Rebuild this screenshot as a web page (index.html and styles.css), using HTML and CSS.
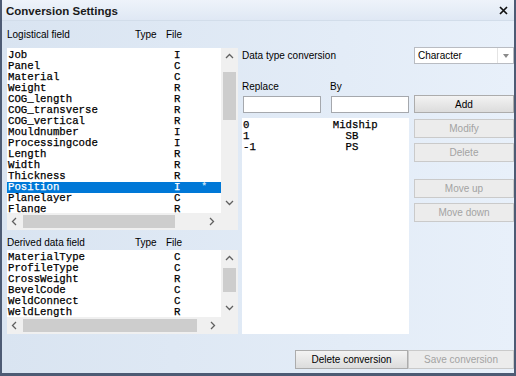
FILE: index.html
```html
<!DOCTYPE html>
<html>
	<head>
		<meta charset="UTF-8">
		<title>Conversion Settings</title>
		<link rel="stylesheet" href="styles.css">
	</head>
	<body>
		<div id="dlg">
			<div class="title">
				<strong>Conversion Settings</strong>
				<svg class="close" width="9" height="9" viewBox="0 0 9 9"><path d="M1 1L8 8M8 1L1 8" stroke="#111" stroke-width="1.7"/></svg>
			</div>
			<div class="main">
				<div class="left">
					<div class="hdr"><span>Logistical field</span><span>Type</span><span>File</span></div>
					<div class="list list1">
						<div class="rows">
							<div class="row"><span class="name">Job</span><span>I</span></div>
							<div class="row"><span class="name">Panel</span><span>C</span></div>
							<div class="row"><span class="name">Material</span><span>C</span></div>
							<div class="row"><span class="name">Weight</span><span>R</span></div>
							<div class="row"><span class="name">COG_length</span><span>R</span></div>
							<div class="row"><span class="name">COG_transverse</span><span>R</span></div>
							<div class="row"><span class="name">COG_vertical</span><span>R</span></div>
							<div class="row"><span class="name">Mouldnumber</span><span>I</span></div>
							<div class="row"><span class="name">Processingcode</span><span>I</span></div>
							<div class="row"><span class="name">Length</span><span>R</span></div>
							<div class="row"><span class="name">Width</span><span>R</span></div>
							<div class="row"><span class="name">Thickness</span><span>R</span></div>
							<div class="row sel"><span class="name">Position</span><span>I</span><span class="star">*</span></div>
							<div class="row"><span class="name">Planelayer</span><span>C</span></div>
							<div class="row"><span class="name">Flange</span><span>R</span></div>
						</div>
						<div class="vbar">
							<div class="arr up"><svg width="9" height="6"><polyline points="1,5 4.5,1.5 8,5" fill="none" stroke="#606060" stroke-width="1.3"/></svg></div>
							<div class="thumb"></div>
							<div class="fill"></div>
							<div class="arr dn"><svg width="9" height="6"><polyline points="1,1 4.5,4.5 8,1" fill="none" stroke="#606060" stroke-width="1.3"/></svg></div>
						</div>
						<div class="hbar">
							<div class="arr lt"><svg width="6" height="9"><polyline points="5,1 1.5,4.5 5,8" fill="none" stroke="#606060" stroke-width="1.3"/></svg></div>
							<div class="thumb"></div>
							<div class="fill"></div>
							<div class="arr rt"><svg width="6" height="9"><polyline points="1,1 4.5,4.5 1,8" fill="none" stroke="#606060" stroke-width="1.3"/></svg></div>
						</div>
						<div class="corner"></div>
					</div>
					<div class="hdr hdr2"><span>Derived data field</span><span>Type</span><span>File</span></div>
					<div class="list list2">
						<div class="rows">
							<div class="row"><span class="name">MaterialType</span><span>C</span></div>
							<div class="row"><span class="name">ProfileType</span><span>C</span></div>
							<div class="row"><span class="name">CrossWeight</span><span>R</span></div>
							<div class="row"><span class="name">BevelCode</span><span>C</span></div>
							<div class="row"><span class="name">WeldConnect</span><span>C</span></div>
							<div class="row"><span class="name">WeldLength</span><span>R</span></div>
						</div>
						<div class="vbar">
							<div class="arr up"><svg width="9" height="6"><polyline points="1,5 4.5,1.5 8,5" fill="none" stroke="#606060" stroke-width="1.3"/></svg></div>
							<div class="thumb"></div>
							<div class="fill"></div>
							<div class="arr dn"><svg width="9" height="6"><polyline points="1,1 4.5,4.5 8,1" fill="none" stroke="#606060" stroke-width="1.3"/></svg></div>
						</div>
						<div class="hbar">
							<div class="arr lt"><svg width="6" height="9"><polyline points="5,1 1.5,4.5 5,8" fill="none" stroke="#606060" stroke-width="1.3"/></svg></div>
							<div class="thumb"></div>
							<div class="fill"></div>
							<div class="arr rt"><svg width="6" height="9"><polyline points="1,1 4.5,4.5 1,8" fill="none" stroke="#606060" stroke-width="1.3"/></svg></div>
						</div>
						<div class="corner"></div>
					</div>
				</div>
				<div class="right">
					<div class="dtrow">
						<span>Data type conversion</span>
						<div class="combo"><span>Character</span><div class="drop"><i></i></div></div>
					</div>
					<div class="labels"><span>Replace</span><span>By</span></div>
					<div class="inputs">
						<input type="text" class="in1">
						<input type="text" class="in2">
						<button class="btn">Add</button>
					</div>
					<div class="lower">
						<div class="conv">0             Midship
1               SB
-1              PS</div>
						<div class="btns">
							<button class="btn off">Modify</button>
							<button class="btn off">Delete</button>
							<button class="btn off mv">Move up</button>
							<button class="btn off">Move down</button>
						</div>
					</div>
				</div>
			</div>
			<div class="foot">
				<button class="btn wide">Delete conversion</button>
				<button class="btn off save">Save conversion</button>
			</div>
		</div>
	</body>
</html>
```
FILE: styles.css
```css
* {margin: 0;padding: 0;box-sizing: border-box;}
body {width: 516px;height: 376px;overflow: hidden;font: 10px "Liberation Sans", Arial, sans-serif;color: #000;}
#dlg {width: 516px;height: 376px;display: flex;flex-direction: column;border: solid #4d5b74;border-width: 0 2px 3px 2px;background: linear-gradient(to right, #d9e4f1, #e8f0fa);}
.title {height: 21px;flex: none;display: flex;align-items: center;justify-content: space-between;padding: 1px 6px 0 4px;background: linear-gradient(#eef3fa, #dfe8f4);border-bottom: 1px solid #d2ddea;}
.title strong {font-size: 11.5px;color: #1a1a1a;}
.main {display: flex;gap: 4px;padding-left: 5px;height: 313px;flex: none;}

.left {width: 231px;display: flex;flex-direction: column;}
.hdr {display: grid;grid-template-columns: 128px 31px auto;height: 13px;line-height: 13px;margin: 7px 0 7px;}
.hdr2 {margin: 6px 0 1px;}
.list {display: grid;grid-template-columns: 214px 17px;background: #fff;}
.list1 {height: 182px;grid-template-rows: 165px 17px;}
.list2 {height: 84px;grid-template-rows: 67px 17px;}
.rows {overflow: hidden;padding-top: 2px;font: 10.7px/11px "Liberation Mono", "Courier New", monospace;-webkit-text-stroke: 0.25px;}
.row {display: flex;height: 11px;padding-left: 1px;white-space: pre;}
.row .name {width: 166px;}
.row.sel {background: #0078d7;color: #fff;}
.row .star {margin-left: 21px;font-size: 9px;color: #cfe3f7;}

.vbar, .hbar, .corner {background: #f0f0f0;}
.vbar {display: flex;flex-direction: column;}
.hbar {display: flex;}
.arr {display: flex;align-items: center;justify-content: center;flex: none;}
.vbar .up {height: 16px;}
.vbar .dn {height: 20px;}
.vbar .thumb {margin: 8px 2px 0;height: 48px;background: #cdcdcd;}
.list2 .vbar .up {height: 16px;}
.list2 .vbar .thumb {margin-top: 2px;height: 24px;}
.list2 .vbar .dn {height: 18px;}
.fill {flex: 1;}
.hbar .lt {width: 14px;}
.hbar .rt {width: 18px;}
.hbar .thumb {margin: 2px 0 2px 2px;width: 152px;background: #cdcdcd;}
.list2 .hbar .thumb {width: 174px;}
.list2 .hbar .rt {width: 16px;}

.right {width: 272px;display: flex;flex-direction: column;}
.dtrow {display: flex;justify-content: space-between;align-items: center;height: 17px;margin-top: 26px;}
.combo {width: 100px;height: 17px;display: flex;align-items: center;background: #fff;border: 1px solid #b9bcc2;}
.combo span {flex: 1;padding-left: 3px;}
.drop {width: 16px;height: 15px;border-left: 1px solid #e4e4e4;display: flex;align-items: center;justify-content: center;}
.drop i {border: 3px solid transparent;border-top: 4px solid #8a8a8a;border-bottom: 0;}
.labels {display: grid;grid-template-columns: 88px auto;height: 12px;line-height: 12px;margin-top: 17px;}
.inputs {display: flex;height: 18px;margin-top: 2px;}
.inputs input {width: 78px;height: 17px;margin-top: 1px;border: 1px solid #a5a8ad;background: #fff;}
.in1 {margin-left: 1px;}
.in2 {margin-left: 10px;}
.inputs .btn {margin-left: 5px;height: 18px;}
.btn {width: 100px;height: 19px;border: 1px solid #acacac;background: linear-gradient(#f3f3f3, #dcdcdc);font: 10px "Liberation Sans", Arial, sans-serif;color: #000;}
.btn.off {background: #ececec;border-color: #cacaca;color: #a3a3a3;}
.lower {display: flex;gap: 5px;margin-top: 5px;height: 216px;}
.conv {width: 167px;background: #fff;padding: 2px 0 0 1px;white-space: pre;font: 10.7px/11px "Liberation Mono", "Courier New", monospace;-webkit-text-stroke: 0.25px;}
.btns {display: flex;flex-direction: column;gap: 5px;padding-top: 1px;}
.btns .mv {margin-top: 12px;}

.foot {display: flex;justify-content: flex-end;margin-top: 16px;}
.foot .wide {width: 113px;}
.foot .save {width: 106px;}
```
